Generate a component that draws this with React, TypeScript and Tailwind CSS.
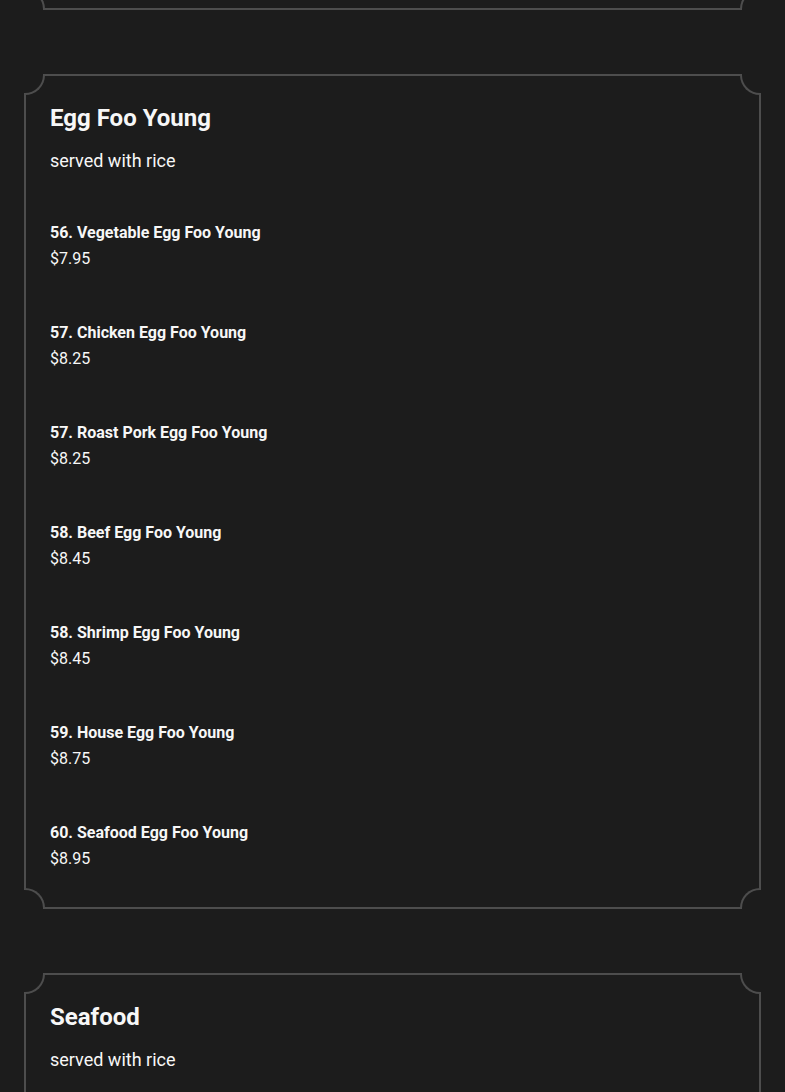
import React from "react";

const BG = "bg-[#1c1c1c]";

function Corner({ pos }: { pos: "tl" | "tr" | "bl" | "br" }) {
  const cls = {
    tl: "-top-[2px] -left-[2px] rounded-br-[20px] border-r-2 border-b-2",
    tr: "-top-[2px] -right-[2px] rounded-bl-[20px] border-l-2 border-b-2",
    bl: "-bottom-[2px] -left-[2px] rounded-tr-[20px] border-r-2 border-t-2",
    br: "-bottom-[2px] -right-[2px] rounded-tl-[20px] border-l-2 border-t-2",
  }[pos];
  return (
    <span
      className={`absolute w-[21px] h-[21px] bg-[#1c1c1c] border-[#4d4d4d] ${cls}`}
    />
  );
}

function Card({ children, className = "" }: { children?: React.ReactNode; className?: string }) {
  return (
    <section className={`relative border-2 border-[#4d4d4d] mx-[24px] ${className}`}>
      <Corner pos="tl" />
      <Corner pos="tr" />
      <Corner pos="bl" />
      <Corner pos="br" />
      {children}
    </section>
  );
}

const items = [
  ["56. Vegetable Egg Foo Young", "$7.95"],
  ["57. Chicken Egg Foo Young", "$8.25"],
  ["57. Roast Pork Egg Foo Young", "$8.25"],
  ["58. Beef Egg Foo Young", "$8.45"],
  ["58. Shrimp Egg Foo Young", "$8.45"],
  ["59. House Egg Foo Young", "$8.75"],
  ["60. Seafood Egg Foo Young", "$8.95"],
];

export default function App() {
  return (
    <div
      className={`${BG} min-h-[1092px] h-[1092px] overflow-hidden text-[#f7f7f7]`}
      style={{ fontFamily: "Roboto, 'Noto Sans', sans-serif" }}
    >
      <Card className="-mt-[100px] h-[110px]" />
      <Card className="mt-[64px] px-[24px] pt-[26px] pb-[35px]">
        <h2 className="text-[24px] leading-[32px] font-bold">Egg Foo Young</h2>
        <p className="text-[18px] leading-[26px] mt-[14px]">served with rice</p>
        <div className="mt-[46px] flex flex-col gap-[48px]">
          {items.map(([n, p], i) => (
            <div key={i} className="flex flex-col">
              <div className="text-[16px] leading-[26px] font-bold">{n}</div>
              <div className="text-[16px] leading-[26px]">{p}</div>
            </div>
          ))}
        </div>
      </Card>
      <Card className="mt-[64px] px-[24px] pt-[26px] pb-[35px]">
        <h2 className="text-[24px] leading-[32px] font-bold">Seafood</h2>
        <p className="text-[18px] leading-[26px] mt-[14px]">served with rice</p>
        <div className="h-[200px]" />
      </Card>
    </div>
  );
}
